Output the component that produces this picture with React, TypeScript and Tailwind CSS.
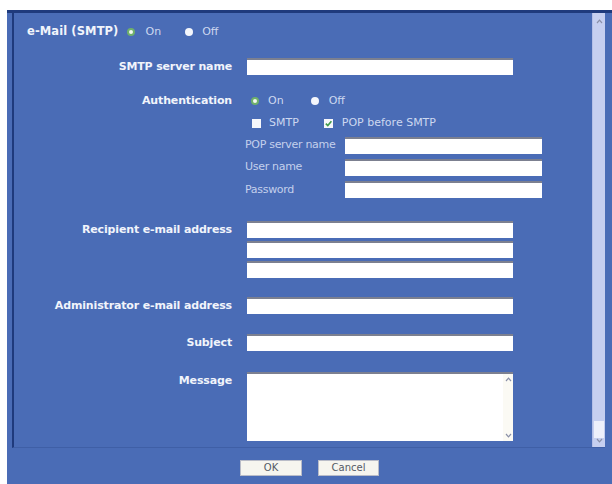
const font = { fontFamily: '"DejaVu Sans", Verdana, sans-serif' };

function Radio({ checked }: { checked?: boolean }) {
  return checked ? (
    <span className="inline-block w-[8px] h-[8px] rounded-full bg-[#f2f8f0] border-2 border-[#6fb06a]" />
  ) : (
    <span className="inline-block w-[8px] h-[8px] rounded-full bg-[#f4f6fc]" />
  );
}

function Check({ checked }: { checked?: boolean }) {
  return (
    <svg width="9" height="9" viewBox="0 0 9 9">
      <rect x="0" y="0" width="9" height="9" fill="#f6f7fb" />
      {checked && (
        <path d="M1.8 4.6 L3.8 6.6 L7.4 2.2" stroke="#3f9a4a" strokeWidth="1.6" fill="none" />
      )}
    </svg>
  );
}

function Field({ className = "" }: { className?: string }) {
  return (
    <div
      className={`h-[17px] bg-white border-t-2 border-[#7c8090] ${className}`}
    />
  );
}

function Row({
  label,
  mt,
  children,
}: {
  label: string;
  mt: string;
  children: React.ReactNode;
}) {
  return (
    <div className={`flex items-start ${mt}`}>
      <div className="w-[218px] text-right font-bold text-[11px] tracking-[-0.15px] leading-[17px] text-[#f1f4fb]">
        {label}
      </div>
      <div className="ml-[15px]">{children}</div>
    </div>
  );
}

function Chevron({ up }: { up?: boolean }) {
  return (
    <svg width="7" height="5" viewBox="0 0 7 5">
      <path
        d={up ? "M1 4 L3.5 1.2 L6 4" : "M1 1 L3.5 3.8 L6 1"}
        stroke="#8a90a8"
        strokeWidth="1.2"
        fill="none"
      />
    </svg>
  );
}

export default function App() {
  return (
    <div className="w-[612px] h-[484px] bg-white pt-[10px] pl-[7px]" style={font}>
      <div className="h-full flex flex-col bg-[#4a6cb6] border-t-[3px] border-[#1f3a7c]">
        <div className="flex h-[435px] ml-[5px] w-[593px] border-l-2 border-b border-[#1f3a7c] border-b-[#3f5fa6]">
          <div className="flex-1 flex flex-col">
            {/* e-Mail on/off */}
            <div className="flex items-center mt-[12px] ml-[13px] h-[14px] text-[11px]">
              <span className="font-bold text-[11.5px] tracking-[0.1px] text-[#f1f4fb]">e-Mail (SMTP)</span>
              <span className="ml-[9px] flex items-center"><Radio checked /></span>
              <span className="ml-[10px] text-[#cdd8f0]">On</span>
              <span className="ml-[24px] flex items-center"><Radio /></span>
              <span className="ml-[9px] text-[#cdd8f0]">Off</span>
            </div>

            <Row label="SMTP server name" mt="mt-[19px]">
              <Field className="w-[266px]" />
            </Row>

            {/* Authentication */}
            <div className="flex items-center mt-[19px] h-[14px]">
              <div className="w-[218px] text-right font-bold text-[11px] tracking-[-0.15px] text-[#f1f4fb]">
                Authentication
              </div>
              <div className="ml-[19px] flex items-center text-[11px] text-[#cdd8f0]">
                <Radio checked />
                <span className="ml-[9px]">On</span>
                <span className="ml-[27px] flex items-center"><Radio /></span>
                <span className="ml-[10px]">Off</span>
              </div>
            </div>
            <div className="flex items-center mt-[8px] h-[14px] ml-[238px] text-[11px] text-[#cdd8f0]">
              <Check />
              <span className="ml-[8px]">SMTP</span>
              <span className="ml-[25px] flex items-center"><Check checked /></span>
              <span className="ml-[9px]">POP before SMTP</span>
            </div>

            <div className="flex flex-col ml-[231px]">
              <div className="flex items-start mt-[7px]">
                <div className="w-[100px] text-[11px] tracking-[-0.3px] leading-[15px] text-[#c4d0ec] whitespace-nowrap">POP server name</div>
                <Field className="w-[197px]" />
              </div>
              <div className="flex items-start mt-[5px]">
                <div className="w-[100px] text-[11px] tracking-[-0.3px] leading-[15px] text-[#c4d0ec]">User name</div>
                <Field className="w-[197px]" />
              </div>
              <div className="flex items-start mt-[5px]">
                <div className="w-[100px] text-[11px] tracking-[-0.3px] leading-[17px] text-[#c4d0ec]">Password</div>
                <Field className="w-[197px]" />
              </div>
            </div>

            <Row label="Recipient e-mail address" mt="mt-[23px]">
              <div className="flex flex-col gap-[3px]">
                <Field className="w-[266px]" />
                <Field className="w-[266px]" />
                <Field className="w-[266px]" />
              </div>
            </Row>

            <Row label="Administrator e-mail address" mt="mt-[19px]">
              <Field className="w-[266px]" />
            </Row>

            <Row label="Subject" mt="mt-[20px]">
              <Field className="w-[266px]" />
            </Row>

            <Row label="Message" mt="mt-[21px]">
              <div className="w-[266px] h-[69px] bg-white border-t-2 border-[#7c8090] flex justify-end">
                <div className="w-[10px] flex flex-col items-center justify-between py-[3px] bg-[#fbfaf4]">
                  <Chevron up />
                  <Chevron />
                </div>
              </div>
            </Row>
          </div>

          {/* scrollbar */}
          <div className="w-[13px] bg-[#c6cff0] flex flex-col items-center justify-between pt-[6px] pb-[4px] border-l border-[#b4bfe8]">
            <Chevron up />
            <div className="flex flex-col items-center">
              <div className="w-[10px] h-[17px] bg-[#eef0fb]" />
              <Chevron />
            </div>
          </div>
        </div>

        <div className="flex justify-center gap-[16px] pt-[12px]">
          <button className="w-[62px] h-[16px] bg-[#f6f5ef] border border-[#b9bcc8] text-[10px] leading-none text-[#555a66]">
            OK
          </button>
          <button className="w-[61px] h-[16px] bg-[#f6f5ef] border border-[#b9bcc8] text-[10px] leading-none text-[#555a66]">
            Cancel
          </button>
        </div>
      </div>
    </div>
  );
}
